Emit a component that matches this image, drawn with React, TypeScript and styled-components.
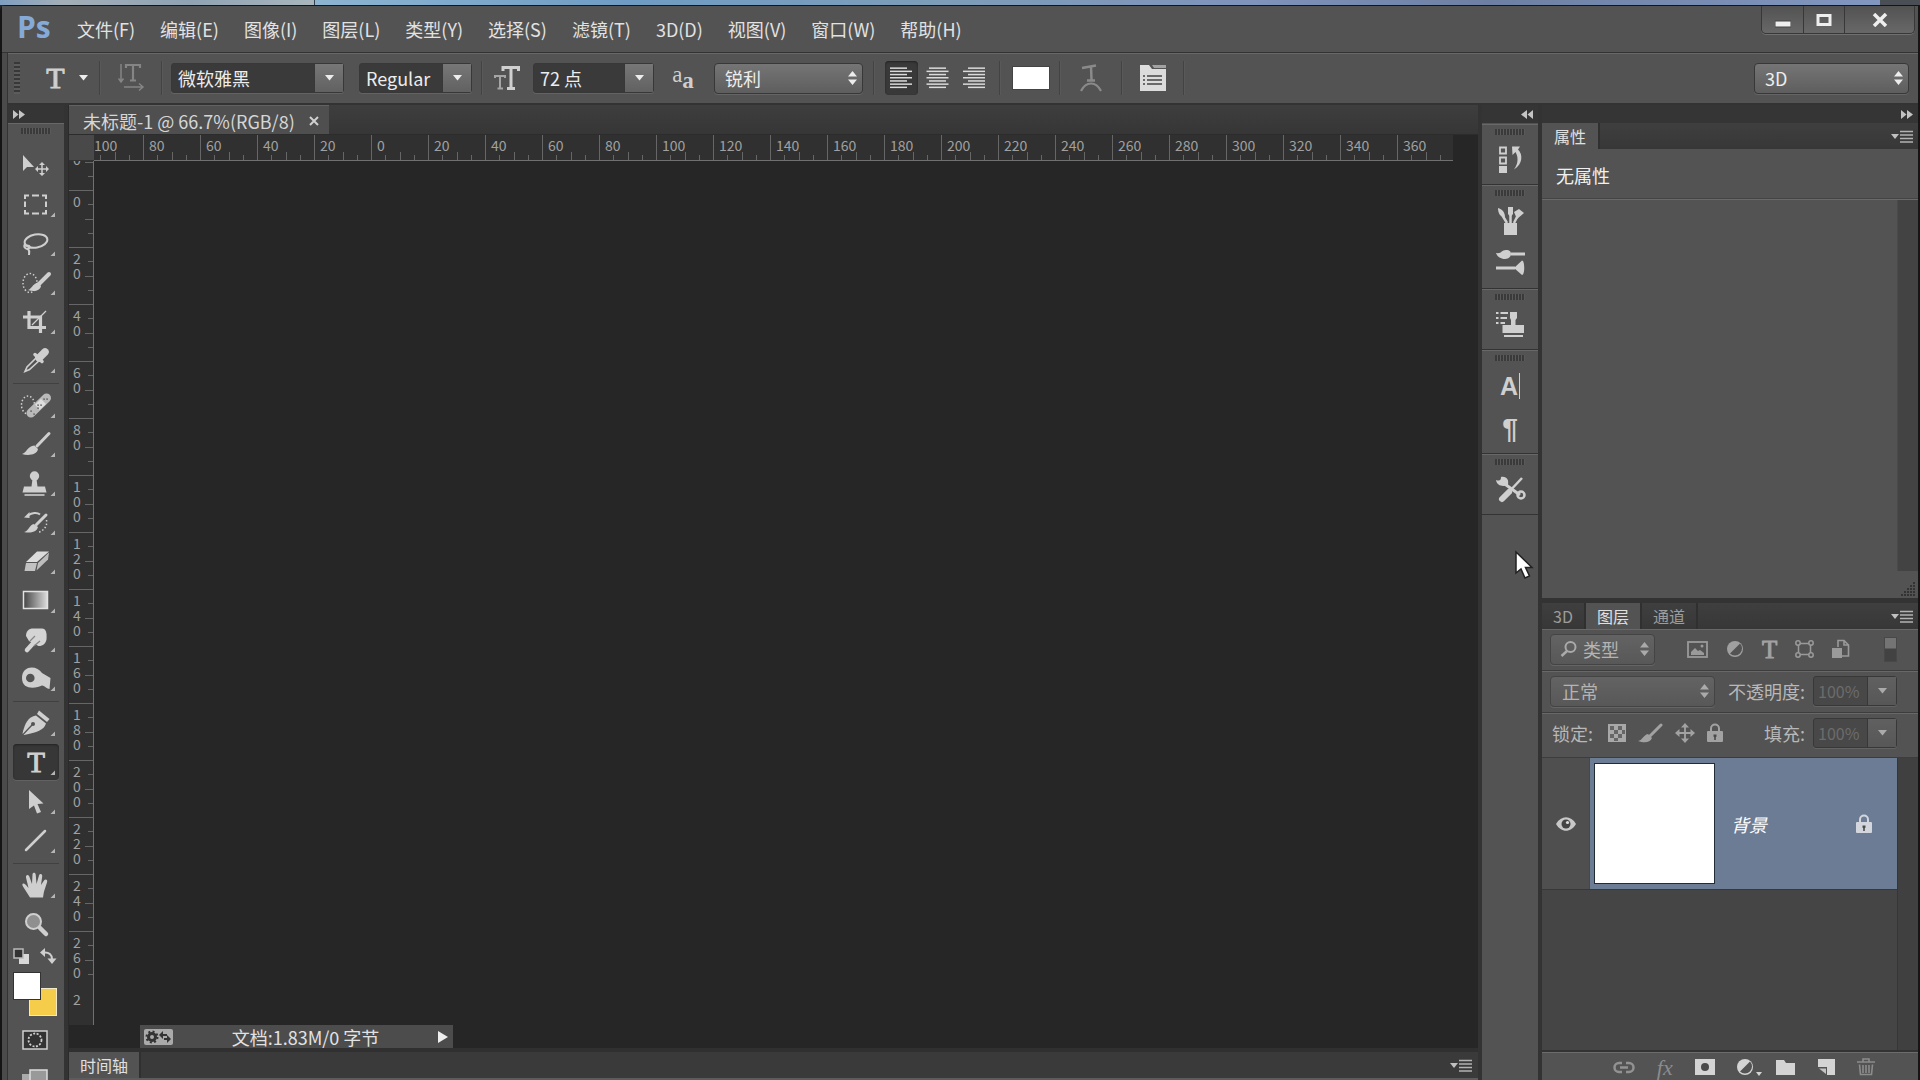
import React from "react";
import styled, { createGlobalStyle, css } from "styled-components";

const c = {
  panel: "#535353",
  bar: "#3a3a3a",
  dark: "#303030",
  canvas: "#262626",
  line: "#333333",
  hi: "#686868",
  icon: "#cfcfcf",
  dim: "#9a9a9a",
  text: "#e2e2e2",
};

const GlobalStyle = createGlobalStyle`
  * { box-sizing: border-box; }
  body { margin: 0; background: #262626; overflow: hidden; }
  body, button, input, select {
    font-family: "Noto Sans CJK SC", "Noto Sans", sans-serif;
    font-size: 18px;
    line-height: 24px;
    color: ${c.text};
  }
  button { background: none; border: 0; padding: 0; }
  svg { display: block; }
`;

/* ---------- window frame ---------- */

const Page = styled.div`
  height: 100vh;
  display: flex;
  flex-direction: column;
`;
const Desktop = styled.div`
  display: flex;
  height: 5px;
  flex: none;
  background: #4a4f55;
`;
const DesktopLeft = styled.div`
  width: 315px;
  background: linear-gradient(90deg, #7f9fc0, #a3afb8 20%, #8fa3b3 60%, #a9b6bd);
  border-right: 1px solid #33414d;
`;
const DesktopRight = styled.div`
  flex: 1;
  margin-right: 40px;
  background: linear-gradient(90deg, #8db5d2, #6f9cc4 20%, #7d9db8 40%, #7f93bb 60%, #6d80a3 75%, #8297c0);
`;
const AppWindow = styled.div`
  flex: 1;
  min-height: 0;
  display: flex;
  flex-direction: column;
  background: #4b4b4b;
  border: solid #151515;
  border-width: 1px 2px 0 2px;
  border-top-left-radius: 6px;
  padding-left: 5px;
`;

/* ---------- menu bar ---------- */

const MenuBar = styled.header`
  display: flex;
  align-items: center;
  height: 47px;
  flex: none;
  margin-left: -5px;
  padding-left: 15px;
  background: ${c.panel};
  border-bottom: 1px solid ${c.line};
`;
const Logo = styled.span`
  font-family: "Open Sans", sans-serif;
  font-size: 30px;
  font-weight: 700;
  line-height: 36px;
  padding-bottom: 4px;
  color: #86aad8;
  width: 60px;
`;
const Menu = styled.nav`
  display: flex;
  gap: 25px;
  flex: 1;
`;
const MenuItem = styled.button`
  white-space: nowrap;
`;
const WindowControls = styled.div`
  display: flex;
  align-self: flex-start;
  height: 28px;
  margin-right: 3px;
  border: 1px solid #383838;
  border-top: 0;
  border-radius: 0 0 5px 5px;
  background: linear-gradient(#525252, #686868);
  box-shadow: 0 1px 0 #707070;
`;
const WindowButton = styled.button<{ $wide?: boolean }>`
  width: ${(p) => (p.$wide ? 70 : 41)}px;
  display: grid;
  place-items: center;
  & + & { border-left: 1px solid #383838; }
`;

/* ---------- options bar ---------- */

const OptionsBar = styled.div`
  display: flex;
  align-items: center;
  height: 52px;
  flex: none;
  border: solid ${c.line};
  border-width: 0 0 2px 1px;
  box-shadow: inset 0 1px 0 ${c.hi};
  background: ${c.panel};
  padding: 0 9px 0 6px;
`;
const SideGrip = styled.span`
  width: 6px;
  height: 32px;
  margin-right: 15px;
  background: repeating-linear-gradient(#383838 0 2px, #5c5c5c 2px 4px);
`;
const Divider = styled.span`
  width: 2px;
  height: 34px;
  background: #434343;
  border-right: 1px solid #595959;
`;
const OptButton = styled.button<{ $w: number; $active?: boolean }>`
  width: ${(p) => p.$w}px;
  height: 34px;
  display: flex;
  align-items: center;
  justify-content: center;
  gap: 14px;
  border-radius: 4px;
  ${(p) => p.$active && css`
    background: #393939;
    box-shadow: inset 0 1px 2px #222;
  `}
`;
const SerifT = styled.span<{ $size: number; $color?: string }>`
  font-family: "Liberation Serif", serif;
  font-size: ${(p) => p.$size}px;
  line-height: ${(p) => p.$size}px;
  -webkit-text-stroke: 1px ${(p) => p.$color ?? c.icon};
  color: ${(p) => p.$color ?? c.icon};
`;
const ComboBox = styled.span<{ $w: number; $dim?: boolean; $ml?: number }>`
  display: inline-flex;
  width: ${(p) => p.$w}px;
  height: 30px;
  margin-left: ${(p) => p.$ml ?? 0}px;
  border: 1px solid #383838;
  border-radius: 3px;
  box-shadow: 0 1px 0 #636363;
  background: ${(p) => (p.$dim ? "#484848" : "#3a3a3a")};
`;
const ComboInput = styled.input<{ $dim?: boolean }>`
  flex: 1;
  min-width: 0;
  padding: 0 4px 0 6px;
  border: 0;
  outline: 0;
  background: none;
  color: ${(p) => (p.$dim ? "#6c6c6c" : "#ededed")};
  ${(p) => p.$dim && css`
    padding: 0 4px;
    font-size: 16px;
  `}
`;
const ComboArrow = styled.button<{ $dim?: boolean }>`
  width: 29px;
  display: grid;
  place-items: center;
  border-left: 1px solid #383838;
  background: ${(p) => (p.$dim ? "linear-gradient(#606060, #575757)" : "linear-gradient(#777, #616161)")};
`;
const SelectBox = styled.span<{ $w: number; $dim?: boolean; $ml?: number }>`
  display: inline-flex;
  align-items: center;
  position: relative;
  width: ${(p) => p.$w}px;
  height: 31px;
  margin-left: ${(p) => p.$ml ?? 0}px;
  border: 1px solid ${(p) => (p.$dim ? "#444" : "#383838")};
  border-radius: 4px;
  box-shadow: 0 1px 0 #656565;
  background: ${(p) => (p.$dim ? "linear-gradient(#636363, #585858)" : "linear-gradient(#757575, #5e5e5e)")};
  > svg { position: absolute; right: 5px; pointer-events: none; }
  > svg.lead { left: 9px; right: auto; }
`;
const Select = styled.select<{ $pad: number; $dim?: boolean }>`
  appearance: none;
  width: 100%;
  height: 100%;
  border: 0;
  outline: 0;
  background: none;
  padding: 0 20px 0 ${(p) => p.$pad}px;
  color: ${(p) => (p.$dim ? "#b4b4b4" : "#ededed")};
`;
const ColorSwatch = styled.button`
  width: 38px;
  height: 24px;
  margin: 0 9px 0 2px;
  background: #fff;
  border: 1px solid #444;
`;
const Spacer = styled.span`
  flex: 1;
`;
const AaText = styled.span<{ $low?: boolean }>`
  font-family: "Liberation Serif", serif;
  font-size: 23px;
  line-height: 20px;
  color: ${c.icon};
  font-weight: ${(p) => (p.$low ? 700 : 400)};
  align-self: ${(p) => (p.$low ? "flex-end" : "flex-start")};
`;
const AaBox = styled.span`
  display: flex;
  height: 26px;
`;

/* ---------- workspace ---------- */

const Workspace = styled.div`
  flex: 1;
  min-height: 0;
  display: flex;
  background: #333;
  border-left: 1px solid ${c.line};
`;
const DockHead = styled.div<{ $end?: boolean }>`
  height: 18px;
  flex: none;
  display: flex;
  align-items: center;
  justify-content: ${(p) => (p.$end ? "flex-end" : "flex-start")};
  padding: 0 5px;
  background: #353535;
`;
const Grip = styled.span`
  display: block;
  width: 30px;
  height: 6px;
  margin: 4px auto 0;
  background: repeating-linear-gradient(90deg, #3a3a3a 0 2px, #5a5a5a 2px 3px);
`;
const ToolColumn = styled.aside`
  width: 56px;
  flex: none;
  display: flex;
  flex-direction: column;
  overflow: hidden;
`;
const ToolBody = styled.div`
  flex: 1;
  background: ${c.panel};
  border-top: 1px solid ${c.hi};
  display: flex;
  flex-direction: column;
  align-items: center;
`;
const ToolList = styled.div`
  padding-top: 12px;
`;
const ToolGroup = styled.div`
  display: flex;
  flex-direction: column;
  gap: 3px;
  padding: 1px 0 2px;
  & + & {
    margin-top: 3px;
    padding-top: 3px;
    border-top: 1px solid #414141;
  }
`;
const ToolButton = styled.button<{ $active?: boolean }>`
  display: grid;
  place-items: center;
  width: 46px;
  height: 36px;
  border-radius: 4px;
  > * { grid-area: 1 / 1; }
  ${(p) => p.$active && css`
    background: #373737;
    box-shadow: inset 0 1px 2px #222, 0 1px 0 #626262;
  `}
`;
const SwatchHead = styled.div`
  display: flex;
  justify-content: space-between;
  width: 44px;
  margin: 4px 2px 0 0;
`;
const Swatches = styled.div`
  display: grid;
  width: 44px;
  height: 44px;
  margin: 8px 2px 0 0;
`;
const Swatch = styled.button<{ $color: string; $back?: boolean }>`
  grid-area: 1 / 1;
  width: 28px;
  height: 28px;
  background: ${(p) => p.$color};
  border: 1px solid ${(p) => (p.$back ? "#f1e9c8" : "#333")};
  ${(p) => p.$back && "place-self: end;"}
`;
const ModeButton = styled.button`
  margin: 14px 2px 0 0;
  & + & { margin-top: 19px; }
`;

/* ---------- document ---------- */

const DocumentArea = styled.main`
  flex: 1;
  min-width: 0;
  display: flex;
  flex-direction: column;
  margin: 0 4px;
  border-left: 1px solid #2b2b2b;
`;
const DocTabs = styled.div`
  display: flex;
  flex: none;
  height: 30px;
  background: linear-gradient(#3e3e3e, #363636);
  border-bottom: 1px solid #2c2c2c;
`;
const DocTab = styled.div`
  display: flex;
  align-items: center;
  justify-content: space-between;
  width: 260px;
  padding: 2px 10px 0 14px;
  background: #4f4f4f;
  border-top: 1px solid #626262;
  white-space: nowrap;
  color: #d6d6d6;
`;
const CanvasGrid = styled.div`
  flex: 1;
  min-height: 0;
  display: grid;
  grid-template: 26px 1fr / 25px 1fr;
  background: ${c.canvas};
`;
const RulerCorner = styled.div`
  background: #494949;
  border-bottom: 1px solid #333;
`;
const HRuler = styled.div`
  display: flex;
  overflow: hidden;
  margin-right: 25px;
  background: #303030;
  border-bottom: 1px solid #707070;
  font-size: 14px;
  line-height: 20px;
  color: #a0a0a0;
`;
const HLabel = styled.span`
  grid-area: 1 / 1 / 2 / 5;
  align-self: start;
  padding-left: 6px;
`;
const HCell = styled.div`
  display: grid;
  grid-template-columns: repeat(4, 1fr);
  align-items: end;
  flex: 0 0 57px;
  height: 100%;
  &:first-child { margin-left: -8px; }
  &:first-child ${HLabel} { padding-left: 8px; }
`;
const HTick = styled.i<{ $n: number; $len: number }>`
  grid-area: 1 / ${(p) => p.$n};
  width: 1px;
  height: ${(p) => p.$len}px;
  background: #666;
`;
const VRuler = styled.div`
  overflow: hidden;
  background: #303030;
  border-right: 1px solid #707070;
  font-size: 14px;
  line-height: 15px;
  color: #a0a0a0;
`;
const VCell = styled.div`
  display: grid;
  grid-template-rows: repeat(4, 1fr);
  justify-items: end;
  height: 57px;
  &:first-child { margin-top: -28px; }
`;
const VLabel = styled.span`
  grid-area: 1 / 1 / 5 / 2;
  justify-self: start;
  width: 8px;
  margin-left: 4px;
  padding-top: 4px;
  word-break: break-all;
`;
const VTick = styled.i<{ $n: number; $len: number }>`
  grid-area: ${(p) => p.$n} / 1;
  width: ${(p) => p.$len}px;
  height: 1px;
  background: #666;
`;
const StatusBar = styled.div`
  display: flex;
  align-items: center;
  flex: none;
  height: 23px;
  padding-left: 71px;
  background: ${c.canvas};
`;
const StatusInfo = styled.div`
  display: flex;
  align-items: center;
  justify-content: space-between;
  width: 313px;
  height: 23px;
  padding: 0 5px 0 4px;
  background: #4c4c4c;
`;
const Timeline = styled.div`
  display: flex;
  align-items: center;
  flex: none;
  height: 32px;
  border: solid #303030;
  border-width: 4px 0 0;
  border-bottom: 2px solid #5c5c5c;
  background: ${c.bar};
  padding-right: 6px;
`;
const PanelTab = styled.button<{ $active?: boolean; $pad?: number }>`
  align-self: stretch;
  padding: 0 ${(p) => p.$pad ?? 11}px;
  font-size: 16px;
  line-height: 24px;
  color: ${(p) => (p.$active ? "#e0e0e0" : "#9c9c9c")};
  background: ${(p) => (p.$active ? c.panel : "transparent")};
  border-right: 2px solid #303030;
`;

/* ---------- right docks ---------- */

const Docks = styled.div`
  display: grid;
  grid-template: 18px minmax(0, 1fr) / 56px 376px;
  column-gap: 4px;
  flex: none;
`;
const IconDock = styled.aside`
  padding-top: 1px;
  background: ${c.panel};
`;
const IconGroup = styled.div`
  display: flex;
  flex-direction: column;
  align-items: center;
  border-top: 1px solid ${c.hi};
  border-bottom: 1px solid #333;
  padding-bottom: 3px;
`;
const DockButton = styled.button`
  display: grid;
  place-items: center;
  width: 46px;
  height: 43px;
  ${Grip} + & { margin-top: 3px; }
`;
const GlyphMark = styled.span<{ $caret?: boolean }>`
  font-family: "Liberation Sans", sans-serif;
  font-size: ${(p) => (p.$caret ? 25 : 28)}px;
  font-weight: 700;
  line-height: 26px;
  color: ${c.icon};
  ${(p) => p.$caret && "border-right: 1px solid #cfcfcf; padding-right: 1px;"}
`;
const Panels = styled.aside`
  display: flex;
  flex-direction: column;
  min-height: 0;
  background: ${c.panel};
`;
const PanelTabs = styled.div`
  display: flex;
  align-items: center;
  flex: none;
  height: 26px;
  background: linear-gradient(#3f3f3f, #373737);
  padding-right: 5px;
`;
const Properties = styled.section`
  flex: none;
  height: 480px;
  display: flex;
  flex-direction: column;
  border-bottom: 5px solid #333;
`;
const PropertiesTitle = styled.div`
  height: 51px;
  flex: none;
  padding: 14px 14px 0;
  border-bottom: 1px solid #6a6a6a;
  box-shadow: inset 0 -1px 0 #444;
  color: #f0f0f0;
`;
const PropertiesBody = styled.div`
  flex: 1;
  display: flex;
  flex-direction: column;
  align-items: flex-end;
`;
const ScrollTrack = styled.div`
  flex: 1;
  width: 21px;
  background: #434343;
  border-left: 1px solid #4a4a4a;
`;
const ResizeGrip = styled.svg`
  margin: 11px 2px 1px;
`;
const LayersPanel = styled.section`
  flex: 1;
  min-height: 0;
  display: flex;
  flex-direction: column;
`;
const LayerRow = styled.div<{ $last?: boolean }>`
  display: flex;
  align-items: center;
  flex: none;
  height: ${(p) => (p.$last ? 45 : 42)}px;
  padding: 0 21px ${(p) => (p.$last ? 6 : 2)}px 8px;
  border-top: 1px solid #686868;
  border-bottom: 1px solid #3d3d3d;
`;
const FieldLabel = styled.label<{ $ml?: number }>`
  margin-left: ${(p) => p.$ml ?? 0}px;
  color: #b8b8b8;
  white-space: nowrap;
`;
const IconRow = styled.div<{ $gap: number; $ml: number }>`
  display: flex;
  align-items: center;
  gap: ${(p) => p.$gap}px;
  margin-left: ${(p) => p.$ml}px;
`;
const FilterToggle = styled.button`
  width: 13px;
  height: 25px;
  background: linear-gradient(#747474 0 10px, #424242 11px);
  border: 1px solid #484848;
`;
const LayerList = styled.div`
  flex: 1;
  min-height: 0;
  display: flex;
  background: #454545;
`;
const LayerItems = styled.div`
  flex: 1;
`;
const LayerScroll = styled.div`
  flex: none;
  width: 21px;
  background: #404040;
  border-left: 1px solid #363636;
`;
const LayerItem = styled.div`
  display: flex;
  height: 132px;
  border-bottom: 1px solid #383838;
`;
const EyeButton = styled.button`
  width: 48px;
  display: grid;
  place-items: center;
  background: #4f4f4f;
  border-right: 1px solid #3f4856;
`;
const LayerBody = styled.div`
  flex: 1;
  display: flex;
  align-items: center;
  padding: 0 25px 0 4px;
  background: #6c7c94;
`;
const Thumb = styled.div`
  flex: none;
  width: 121px;
  height: 121px;
  margin-right: 16px;
  background: #fff;
  border: 1px solid #222b38;
`;
const LayerName = styled.span`
  flex: 1;
  font-size: 18px;
  font-style: italic;
  color: #fff;
`;
const LayerFooter = styled.footer`
  display: flex;
  align-items: center;
  justify-content: space-between;
  flex: none;
  height: 30px;
  padding: 2px 43px 0 71px;
  border-top: 2px solid #333;
  box-shadow: inset 0 1px 0 #6c6c6c;
`;
const Fx = styled.span`
  font-family: "Liberation Serif", serif;
  font-size: 22px;
  line-height: 22px;
  font-style: italic;
  color: #8c8c8c;
`;
const Cursor = styled.svg`
  position: fixed;
  left: 1514px;
  top: 550px;
`;

/* ---------- small drawings ---------- */

const I = c.icon;

const Down = ({ color = "#ededed" }: { color?: string }) => (
  <svg width="9" height="6"><path d="M0 0H9L4.5 5.5Z" fill={color} /></svg>
);
const UpDown = ({ color = "#ededed" }: { color?: string }) => (
  <svg width="9" height="14"><path d="M0 5.5 4.5 0 9 5.5ZM0 8.5H9L4.5 14Z" fill={color} /></svg>
);
const Arrows = ({ left }: { left?: boolean }) => (
  <svg width="12" height="9"><path d={left ? "M6 0V9L0 4.5ZM12 0V9L6.5 4.5Z" : "M0 0V9L5.5 4.5ZM6 0V9L12 4.5Z"} fill="#c4c4c4" /></svg>
);
const PanelMenu = () => (
  <svg width="22" height="13"><path d="M0 4H8L4 9Z" fill="#c0c0c0" /><path d="M9 1.5H22M9 5H22M9 8.5H22M9 12H22" stroke="#b2b2b2" strokeWidth="1.6" /></svg>
);
const AlignIcon = ({ kind }: { kind: "left" | "center" | "right" }) => {
  const widths = [17, 22, 17, 22, 17, 22, 17];
  return (
    <svg width="23" height="22">
      {widths.map((w, i) => {
        const x = kind === "left" ? 0 : kind === "right" ? 23 - w : (23 - w) / 2;
        return <rect key={i} x={x} y={i * 3.2 + 0.4} width={w} height="1.5" fill="#dadada" />;
      })}
    </svg>
  );
};
const MoveCross = ({ color }: { color: string }) => (
  <svg width="20" height="20" viewBox="-10 -10 20 20">
    <path d="M-7 0H7M0-7V7" stroke={color} strokeWidth="1.8" />
    <path d="M-10 0-5.5-4V4ZM10 0 5.5-4V4ZM0-10-4-5.5H4ZM0 10-4 5.5H4Z" fill={color} />
  </svg>
);
const HalfCircle = ({ color, menu }: { color: string; menu?: boolean }) => (
  <svg width="18" height="18" overflow="visible">
    <circle cx="9" cy="9" r="8" fill={color} />
    <path d="M14 3.6A7 7 0 0 1 4 13.400Z" fill="#535353" />
    {menu && <path d="M20 14H26L23 18Z" fill={color} />}
  </svg>
);
const Padlock = ({ color }: { color: string }) => (
  <svg width="16" height="19"><path d="M4 9V5.500a4 4 0 0 1 8 0V9" fill="none" stroke={color} strokeWidth="2" /><rect y="8" width="16" height="11" rx="1" fill={color} /><path d="M6.500 11.500h3v2l-.7.7V17H7.200v-2.800l-.7-.7Z" fill="#4a4a4a" /></svg>
);

type Tool = { name: string; art: React.ReactNode; plain?: boolean; active?: boolean };

const toolGroups: Tool[][] = [
  [
    { name: "移动工具", plain: true, art: <>
      <path d="M10 8V24L14 20H21Z" fill={I} />
      <path d="M23.500 22H34.500M29 16.500V27.500" stroke={I} strokeWidth="1.500" />
      <path d="M22 22l3-3v6ZM36 22l-3-3v6ZM29 15l-3 3h6ZM29 29l-3-3h6Z" fill={I} /></> },
    { name: "矩形选框工具", art: <path d="M12 13V9.500H16M19 9.500H26M29 9.500H33V13M33 15.500V21M33 24V27.500H29M26 27.500H19M16 27.500H12V24M12 21V15.500" fill="none" stroke={I} strokeWidth="2" /> },
    { name: "套索工具", art: <g fill="none" stroke={I} strokeWidth="2"><ellipse cx="23" cy="16" rx="11.500" ry="6.500" transform="rotate(-10 23 16)" /><path d="M12 19c-2 3 1 6 4 4.500 2-2-1-4-3.500-2.500M15 24c2 2 1 4 1 6" /></g> },
    { name: "快速选择工具", art: <>
      <ellipse cx="17" cy="19" rx="7" ry="9.500" fill="none" stroke={I} strokeWidth="1.500" strokeDasharray="1.500 2" />
      <path d="M36 10 26 20" stroke={I} strokeWidth="4" strokeLinecap="round" />
      <path d="M25 18.500 28 22c-1 5-7 6-13 4 4-1 4-6 10-7.500Z" fill={I} /></> },
    { name: "裁剪工具", art: <><path d="M10 14H27.500V30M16 8V24.500H33" fill="none" stroke={I} strokeWidth="3.200" /><path d="M19 22 33 8" stroke={I} strokeWidth="1.200" /></> },
    { name: "吸管工具", art: <>
      <path d="M25 14 14 25 12 29.500 16.500 27.500 28 17" fill="none" stroke={I} strokeWidth="1.600" />
      <path d="M22 12.500 29 19.500" stroke={I} strokeWidth="3.500" strokeLinecap="round" />
      <path d="M26 16 32 10" stroke={I} strokeWidth="7.500" strokeLinecap="round" /></> },
  ],
  [
    { name: "修复画笔工具", art: <>
      <ellipse cx="15" cy="18" rx="6.500" ry="9" fill="none" stroke={I} strokeWidth="1.500" strokeDasharray="1.500 2" />
      <path d="M18 26 33.500 11" stroke="#b9b9b9" strokeWidth="9" strokeLinecap="round" />
      <path d="M22 17.500 28 12l5 5-6.500 6Z" fill="#dedede" />
      <path d="M18 24l.1.100M21 27l.1.100M25 18l.1.100M28 18l.1.100M25 21l.1.100M31 12l.1.100M34 12l.1.100" stroke="#555" strokeWidth="1.500" strokeLinecap="round" /></> },
    { name: "画笔工具", art: <><path d="M36 7.500 24 20" stroke={I} strokeWidth="3" strokeLinecap="round" /><path d="M21.500 19.500 25 23c-1 6-10 7-16 5 5-1 5-8 12.500-8.500Z" fill={I} /></> },
    { name: "仿制图章工具", art: <><circle cx="21.500" cy="11" r="4.700" fill={I} /><path d="M19.500 14H23.500L24.500 21.500H32L33.500 27.500H9.500L11 21.500H18.500Z" fill={I} /><path d="M11.500 30H31.500" stroke={I} strokeWidth="1.600" /></> },
    { name: "历史记录画笔工具", art: <>
      <path d="M15 11.500c4-3 9-3.500 12-1" fill="none" stroke={I} strokeWidth="2" /><path d="M11 13.500 16.500 8V14Z" fill={I} />
      <path d="M33 11 23.500 20.500" stroke={I} strokeWidth="3" strokeLinecap="round" />
      <path d="M21 20 25 23c-1 5-8 6.500-14 5 5-1 5-7 10-8Z" fill={I} />
      <path d="M33.500 16c1 6-2 10-8 12.500" fill="none" stroke={I} strokeWidth="1.500" strokeDasharray="1.500 2" /></> },
    { name: "橡皮擦工具", art: <><path d="M24 8.500H36L24 19H13Z" fill="#dcdcdc" /><path d="M13 20H24L22 28H11.500Z" fill="#c2c2c2" /><path d="M36 9.500 35 16.500 23.500 27.500 25 20Z" fill="#bdbdbd" /></> },
    { name: "渐变工具", art: <><defs><linearGradient id="grad"><stop offset="0" stopColor="#444" /><stop offset="1" stopColor="#ddd" /></linearGradient></defs><rect x="10.500" y="9.500" width="24" height="17" fill="url(#grad)" stroke="#e2e2e2" strokeWidth="1.500" /></> },
    { name: "涂抹工具", art: <><path d="M13 15c0-5 3-7.500 7-7.500h9c4 0 5 4 4.500 11-1 4-3 6.500-8 6.500L16 20Z" fill="#d4d4d4" /><path d="M24 18 14 29" stroke="#d4d4d4" strokeWidth="4.500" strokeLinecap="round" /><path d="M22 15 17 20M27 20 21 25" stroke="#858585" strokeWidth="1.200" /></> },
    { name: "减淡工具", art: <path fillRule="evenodd" d="M9 18C9 5 24 5 29 13L37.500 18 36.500 29C34 29 32 26 29 25.500 24 28 9 31 9 18ZM13 18a4.300 4.300 0 1 0 8.600 0 4.300 4.300 0 1 0-8.600 0Z" fill={I} /> },
  ],
  [
    { name: "钢笔工具", art: <><path d="M26 5.500 36.500 14 34 17 24 9Z" fill={I} /><path d="M23 10.500 33 18.500C31 25 24 27.500 11 30L9.500 28.500C12 18 15 12 23 10.500Z" fill={I} /><path d="M10 29.500 19 20" stroke="#535353" strokeWidth="1.300" /><circle cx="20" cy="19" r="2" fill="#535353" /></> },
    { name: "横排文字工具", active: true, art: null },
    { name: "路径选择工具", art: <path d="M16 7 30.500 20.500 24.500 21 28 29 24 30.500 21 22.500 16 26Z" fill={I} /> },
    { name: "直线工具", art: <path d="M13 28 32 9" stroke={I} strokeWidth="2.500" strokeLinecap="round" /> },
  ],
  [
    { name: "抓手工具", art: <path d="M17 30.500 10 19.500C8 16 11 15.500 13 18L15.500 21 13 10.500C12.500 7.500 15.500 7 16.500 10L19 17 19.500 7.500C19.500 5 22.500 5 22.700 7.500L23.500 17 26 8.500C27 6 29.700 7 29.200 9.500L28 18 31 13.500C32.500 11.500 35 12.500 34 15.500L31.500 23C30.500 26 30.500 28 30 30.500Z" fill={I} /> },
    { name: "缩放工具", plain: true, art: <><circle cx="20.500" cy="15.500" r="7.500" fill="#8f8f8f" stroke={I} strokeWidth="2" /><path d="M27 22 33 28" stroke={I} strokeWidth="4.500" strokeLinecap="round" /></> },
  ],
];

const dockGroups: { name: string; art: React.ReactNode }[][] = [
  [{ name: "历史记录", art: <><path d="M7 9.500H13V15.500H7ZM7 19.500H13V25.500H7Z" fill="none" stroke={I} strokeWidth="1.800" /><rect x="6" y="28" width="8" height="7" fill={I} /><path d="M19 8.500H27L25 11.500C30 16 30 26 21 31.500 26 25 25 18 22.500 14L19.500 17Z" fill={I} /></> }],
  [
    { name: "画笔预设", art: <><rect x="11" y="24" width="13" height="12" fill={I} /><path d="M14 24 8 14M17.500 24V13M21 24 25 16" stroke={I} strokeWidth="2.500" /><path d="M5 9c4 1 7 4 7 9-5 0-7-4-7-9ZM15 8h5v7l-2.500 3L15 15ZM21 13l5-3 5 4-7 6Z" fill={I} /></> },
    { name: "画笔", art: <><path d="M3 11c6 1 5-3 10-3 4 0 5 2 5 4s-2 5-6 5c-5 0-8-3-9-6ZM18 10.500H32V13.500H18ZM3 24.500H22V27.500H3ZM21 26 29 18.500C32 18.500 32 33 29 33Z" fill={I} /></> },
  ],
  [{ name: "仿制源", art: <><path d="M3 10H5.500M3 15H5.500M3 20H5.500M7.500 10H15M7.500 15H14M7.500 20H12" stroke={I} strokeWidth="2.200" /><path d="M17 9H24V15L22.500 17V22H31V30H9.500V22H18V17L17 15ZM11 32H30V34H11Z" fill={I} /></> }],
  [{ name: "字符", art: null }, { name: "段落", art: null }],
  [{ name: "工具预设", art: <><path d="M9 14 27 27" stroke={I} strokeWidth="3" /><path d="M3 12c3 1 5 1 5-3 6-1 8 3 7 8-5 2-11 1-12-5Z" fill={I} /><circle cx="28" cy="27" r="3.500" fill="none" stroke={I} strokeWidth="2.500" /><path d="M29 10 14 26" stroke={I} strokeWidth="2.500" /><path d="M16 24 9 31" stroke={I} strokeWidth="6" strokeLinecap="round" /></> }],
];

/* ---------- rulers ---------- */

const hMarks = Array.from({ length: 24 }, (_, i) => Math.abs(i * 20 - 100));
const vMarks = [...Array.from({ length: 15 }, (_, i) => String(Math.abs(i * 20 - 20))), "2"];
const menus = ["文件(F)", "编辑(E)", "图像(I)", "图层(L)", "类型(Y)", "选择(S)", "滤镜(T)", "3D(D)", "视图(V)", "窗口(W)", "帮助(H)"];

export default function App() {
  return (
    <Page>
      <GlobalStyle />
      <Desktop><DesktopLeft /><DesktopRight /></Desktop>
      <AppWindow>
        <MenuBar>
          <Logo>Ps</Logo>
          <Menu>{menus.map((m) => <MenuItem key={m}>{m}</MenuItem>)}</Menu>
          <WindowControls>
            <WindowButton aria-label="最小化"><svg width="16" height="16"><rect x="0" y="9" width="16" height="6" fill="#eee" stroke="#444" /></svg></WindowButton>
            <WindowButton aria-label="最大化"><svg width="16" height="14"><rect x="2" y="2.500" width="12" height="9" fill="none" stroke="#eee" strokeWidth="3" /></svg></WindowButton>
            <WindowButton $wide aria-label="关闭"><svg width="16" height="14"><path d="M2 1 14 13M14 1 2 13" stroke="#eee" strokeWidth="3.500" /></svg></WindowButton>
          </WindowControls>
        </MenuBar>

        <OptionsBar>
          <SideGrip />
          <OptButton $w={64} aria-label="当前工具"><SerifT $size={30}>T</SerifT><Down /></OptButton>
          <Divider />
          <OptButton $w={60} aria-label="切换文本取向">
            <svg width="27" height="30" fill="none" stroke="#858585"><path d="M3 1V18M.5 15.500 3 19 5.500 15.500M6 24H24M21 20.500 25 24 21 27.500" strokeWidth="1.500" /><path d="M8 5V2H22V5M15 2V17M12 17.500H18" strokeWidth="2.200" /></svg>
          </OptButton>
          <Divider />
          <ComboBox $w={173} $ml={8}><ComboInput aria-label="字体" defaultValue="微软雅黑" /><ComboArrow aria-label="字体列表"><Down /></ComboArrow></ComboBox>
          <ComboBox $w={113} $ml={15}><ComboInput aria-label="字体样式" defaultValue="Regular" /><ComboArrow aria-label="样式列表"><Down /></ComboArrow></ComboBox>
          <OptButton as="span" $w={20}><Divider /></OptButton>
          <OptButton as="label" htmlFor="size" $w={29} aria-label="字体大小">
            <svg width="26" height="26" fill="none" stroke={I}><path d="M9 6V2.500H24.500V6M17 2V23M13 23.500H21" strokeWidth="3" /><path d="M1 13V11H11V13M6 11V23M3.500 23.500H9" strokeWidth="2" stroke="#a5a5a5" /></svg>
          </OptButton>
          <ComboBox $w={121} $ml={12}><ComboInput id="size" defaultValue="72 点" /><ComboArrow aria-label="大小列表"><Down /></ComboArrow></ComboBox>
          <OptButton as="label" htmlFor="aa" $w={58} aria-label="消除锯齿"><AaBox><AaText>a</AaText><AaText $low>a</AaText></AaBox></OptButton>
          <SelectBox $w={149} $ml={2}><Select id="aa" $pad={10}><option>锐利</option></Select><UpDown /></SelectBox>
          <OptButton as="span" $w={22}><Divider /></OptButton>
          <OptButton $w={33} $active aria-label="左对齐"><AlignIcon kind="left" /></OptButton>
          <OptButton $w={39} aria-label="居中对齐"><AlignIcon kind="center" /></OptButton>
          <OptButton $w={33} aria-label="右对齐"><AlignIcon kind="right" /></OptButton>
          <OptButton as="span" $w={20}><Divider /></OptButton>
          <ColorSwatch aria-label="文本颜色" />
          <Divider />
          <OptButton $w={60} aria-label="文字变形">
            <svg width="24" height="30" fill="none" stroke="#8a8a8a"><path d="M3 5 17 2.500M12 3 12.500 17M8 17.500H16" strokeWidth="2.500" /><path d="M2 28C7 18 17 18 22 28" strokeWidth="2.200" /></svg>
          </OptButton>
          <Divider />
          <OptButton $w={60} aria-label="字符和段落面板">
            <svg width="26" height="28"><path d="M0 1H9L12 5H26V27H0Z" fill="#dcdcdc" /><path d="M12 1H26V4H14Z" fill="#a2a2a2" /><path d="M3 12H5M3 16H5M3 20H5M7 12H22M7 16H22M7 20H22" stroke="#444" strokeWidth="1.600" /></svg>
          </OptButton>
          <Divider />
          <Spacer />
          <SelectBox $w={155}><Select aria-label="工作区" $pad={10}><option>3D</option></Select><UpDown /></SelectBox>
        </OptionsBar>

        <Workspace>
          <ToolColumn>
            <DockHead><Arrows /></DockHead>
            <ToolBody>
              <Grip />
              <ToolList>
                {toolGroups.map((group, g) => (
                  <ToolGroup key={g}>
                    {group.map((t) => (
                      <ToolButton key={t.name} aria-label={t.name} $active={t.active}>
                        {t.active && <SerifT $size={29}>T</SerifT>}
                        <svg width="46" height="36">{t.art}{!t.plain && <path d="M42 26.500V31H37.500Z" fill="#b5b5b5" />}</svg>
                      </ToolButton>
                    ))}
                  </ToolGroup>
                ))}
              </ToolList>
              <SwatchHead>
                <button aria-label="默认颜色"><svg width="16" height="16"><rect x="6" y="6" width="10" height="10" fill="#d8d8d8" /><rect x="1" y="1" width="9" height="9" fill="#333" stroke="#bbb" strokeWidth="1.500" /></svg></button>
                <button aria-label="切换颜色"><svg width="17" height="16"><path d="M4 4.500C9 4 12 7 12 11" fill="none" stroke={I} strokeWidth="2" /><path d="M0 4.500 5 0V9ZM12 16 7.500 10.500H16.500Z" fill={I} /></svg></button>
              </SwatchHead>
              <Swatches><Swatch $color="#f5cd4b" $back aria-label="背景色" /><Swatch $color="#fff" aria-label="前景色" /></Swatches>
              <ModeButton aria-label="快速蒙版"><svg width="26" height="20"><rect x="1" y="1" width="24" height="18" fill="#333" stroke={I} strokeWidth="1.500" /><circle cx="13" cy="10" r="6.500" fill="none" stroke={I} strokeWidth="1.800" strokeDasharray="2 1.500" /></svg></ModeButton>
              <ModeButton aria-label="屏幕模式"><svg width="26" height="20"><rect x="0" y="5" width="20" height="14" fill="#aaa" /><rect x="8" y="1" width="17" height="14" fill="#999" stroke="#ddd" strokeWidth="1.500" /></svg></ModeButton>
            </ToolBody>
          </ToolColumn>

          <DocumentArea>
            <DocTabs>
              <DocTab><span>未标题-1 @ 66.7%(RGB/8)</span>
                <button aria-label="关闭文档"><svg width="10" height="10"><path d="M1 1 9 9M9 1 1 9" stroke="#d0d0d0" strokeWidth="2" /></svg></button>
              </DocTab>
            </DocTabs>
            <CanvasGrid>
              <RulerCorner />
              <HRuler>
                {hMarks.map((m, i) => (
                  <HCell key={i}><HLabel>{m}</HLabel><HTick $n={1} $len={25} /><HTick $n={2} $len={5} /><HTick $n={3} $len={8} /><HTick $n={4} $len={5} /></HCell>
                ))}
              </HRuler>
              <VRuler>
                {vMarks.map((m, i) => (
                  <VCell key={i}><VLabel>{m}</VLabel>
                    {i < vMarks.length - 1 && <><VTick $n={1} $len={24} /><VTick $n={2} $len={5} /><VTick $n={3} $len={8} /><VTick $n={4} $len={5} /></>}
                  </VCell>
                ))}
              </VRuler>
            </CanvasGrid>
            <StatusBar>
              <StatusInfo>
                <svg width="29" height="16"><rect width="29" height="16" rx="2" fill="#aaa" /><circle cx="8" cy="8" r="3.500" fill="none" stroke="#333" strokeWidth="3" /><circle cx="8" cy="8" r="5.500" fill="none" stroke="#333" strokeWidth="2" strokeDasharray="2 2.300" /><path d="M15 6 19 2V5H23V7H19V10ZM27 10 23 6V9H20V11H23V14Z" fill="#333" /></svg>
                <span>文档:1.83M/0 字节</span>
                <svg width="10" height="14"><path d="M0 1V13L10 7Z" fill="#eee" /></svg>
              </StatusInfo>
            </StatusBar>
            <Timeline><PanelTab $active>时间轴</PanelTab><Spacer /><PanelMenu /></Timeline>
          </DocumentArea>

          <Docks>
            <DockHead $end><Arrows left /></DockHead>
            <DockHead $end><Arrows /></DockHead>
            <IconDock>
              {dockGroups.map((group, g) => (
                <IconGroup key={g}>
                  <Grip />
                  {group.map((d) => (
                    <DockButton key={d.name} aria-label={d.name}>
                      {d.name === "字符" ? <GlyphMark $caret>A</GlyphMark> : d.name === "段落" ? <GlyphMark>¶</GlyphMark> : <svg width="34" height="43">{d.art}</svg>}
                    </DockButton>
                  ))}
                </IconGroup>
              ))}
            </IconDock>
            <Panels>
              <Properties>
                <PanelTabs><PanelTab $active $pad={12}>属性</PanelTab><Spacer /><PanelMenu /></PanelTabs>
                <PropertiesTitle>无属性</PropertiesTitle>
                <PropertiesBody>
                  <ScrollTrack />
                  <ResizeGrip width="15" height="15">
                    {[0, 1, 2, 3, 4].map((row) =>
                      Array.from({ length: row + 1 }, (_, k) => (
                        <rect key={`${row}-${k}`} x={12 - k * 3} y={row * 3} width="2" height="2" fill="#333" />
                      )),
                    )}
                  </ResizeGrip>
                </PropertiesBody>
              </Properties>
              <LayersPanel>
                <PanelTabs>
                  <PanelTab>3D</PanelTab><PanelTab $active>图层</PanelTab><PanelTab>通道</PanelTab>
                  <Spacer /><PanelMenu />
                </PanelTabs>
                <LayerRow>
                  <SelectBox $w={105} $dim>
                    <svg className="lead" width="18" height="18"><circle cx="10.500" cy="7" r="5" fill="none" stroke="#aaa" strokeWidth="2" /><path d="M7 11 1.500 16" stroke="#aaa" strokeWidth="2.500" /></svg>
                    <Select aria-label="图层过滤" $pad={32} $dim><option>类型</option></Select><UpDown color="#aaa" />
                  </SelectBox>
                  <IconRow $gap={18} $ml={32}>
                    <button aria-label="像素图层"><svg width="21" height="17"><rect x="1" y="1" width="19" height="15" fill="none" stroke={c.dim} strokeWidth="1.800" /><path d="M4 14V11L8 7 11 10 13 9 17 12V14Z" fill={c.dim} /><circle cx="15" cy="5" r="1.500" fill={c.dim} /></svg></button>
                    <button aria-label="调整图层"><HalfCircle color="#a0a0a0" /></button>
                    <button aria-label="文字图层"><SerifT $size={25} $color="#a2a2a2">T</SerifT></button>
                    <button aria-label="形状图层"><svg width="19" height="18" fill="none" stroke={c.dim} strokeWidth="1.500"><path d="M3.500 3.500H15.500V14.500H3.500Z" /><g fill="#535353"><circle cx="3" cy="3" r="2.200" /><circle cx="16" cy="3" r="2.200" /><circle cx="3" cy="15" r="2.200" /><circle cx="16" cy="15" r="2.200" /></g></svg></button>
                    <button aria-label="智能对象"><svg width="18" height="20"><path d="M6 8V1.500H12L16.500 6V17H10M12 1.500V6H16.500" fill="none" stroke={c.dim} strokeWidth="1.600" /><rect y="9" width="10" height="10" fill={c.dim} /></svg></button>
                  </IconRow>
                  <Spacer /><FilterToggle aria-label="打开或关闭图层过滤" />
                </LayerRow>
                <LayerRow>
                  <SelectBox $w={165} $dim><Select aria-label="混合模式" $pad={11} $dim><option>正常</option></Select><UpDown color="#aaa" /></SelectBox>
                  <Spacer />
                  <FieldLabel htmlFor="opacity">不透明度:</FieldLabel>
                  <ComboBox $w={84} $ml={8} $dim><ComboInput id="opacity" $dim defaultValue="100%" /><ComboArrow $dim aria-label="不透明度滑块"><Down color="#aaa" /></ComboArrow></ComboBox>
                </LayerRow>
                <LayerRow $last>
                  <FieldLabel as="span" $ml={2}>锁定:</FieldLabel>
                  <IconRow $gap={12} $ml={15}>
                    <button aria-label="锁定透明像素"><svg width="18" height="18"><rect width="18" height="18" fill="#a8a8a8" /><path d="M2 2H6V6H2ZM10 2H14V6H10ZM6 6H10V10H6ZM14 6H17V10H14ZM2 10H6V14H2ZM10 10H14V14H10ZM6 14H10V17H6Z" fill="#666" /></svg></button>
                    <button aria-label="锁定图像像素"><svg width="25" height="20"><path d="M23 2 12 13" stroke="#a2a2a2" strokeWidth="3" strokeLinecap="round" /><path d="M10 11 14 15C12 20 6 20 0 18 5 17 5 12 10 11Z" fill="#a2a2a2" /></svg></button>
                    <button aria-label="锁定位置"><MoveCross color="#a2a2a2" /></button>
                    <button aria-label="锁定全部"><Padlock color="#a2a2a2" /></button>
                  </IconRow>
                  <Spacer />
                  <FieldLabel htmlFor="fill">填充:</FieldLabel>
                  <ComboBox $w={84} $ml={8} $dim><ComboInput id="fill" $dim defaultValue="100%" /><ComboArrow $dim aria-label="填充滑块"><Down color="#aaa" /></ComboArrow></ComboBox>
                </LayerRow>
                <LayerList>
                  <LayerItems>
                    <LayerItem>
                      <EyeButton aria-label="图层可见性"><svg width="20" height="14"><path d="M0 7C5-2 15-2 20 7 15 16 5 16 0 7Z" fill="#c8c8c8" /><circle cx="10" cy="7" r="4.500" fill="#444" /><circle cx="11.500" cy="5.500" r="1.600" fill="#ddd" /></svg></EyeButton>
                      <LayerBody><Thumb /><LayerName>背景</LayerName><Padlock color="#d3d7dd" /></LayerBody>
                    </LayerItem>
                  </LayerItems>
                  <LayerScroll />
                </LayerList>
                <LayerFooter>
                  <button aria-label="链接图层"><svg width="22" height="13" fill="none" stroke="#929292" strokeWidth="2.500"><path d="M9 2H6A4.500 4.500 0 0 0 6 11H9M13 2H16A4.500 4.500 0 0 1 16 11H13M7 6.500H15" /></svg></button>
                  <button aria-label="图层样式"><Fx>fx</Fx></button>
                  <button aria-label="图层蒙版"><svg width="20" height="16"><rect width="20" height="16" fill="#d4d4d4" /><circle cx="10" cy="8" r="4" fill="#4a4a4a" /></svg></button>
                  <button aria-label="新建调整图层"><HalfCircle color="#d4d4d4" menu /></button>
                  <button aria-label="新建组"><svg width="20" height="16"><path d="M0 1H8L10 4H19V16H0Z" fill="#d4d4d4" /></svg></button>
                  <button aria-label="新建图层"><svg width="17" height="16"><path d="M0 0H17V16H9V8H0Z" fill="#d4d4d4" /><path d="M1 9.500H8V15Z" fill="#c4c4c4" /></svg></button>
                  <button aria-label="删除图层"><svg width="18" height="18" fill="none" stroke="#8c8c8c" strokeWidth="1.600"><path d="M0 4H18M6 3.500V1H12V3.500M2.500 6.500 3.500 16.500H14.500L15.500 6.500M6 7V15M9 7V15M12 7V15" /></svg></button>
                </LayerFooter>
              </LayersPanel>
            </Panels>
          </Docks>
        </Workspace>
      </AppWindow>
      <Cursor width="22" height="30" viewBox="0 0 22 30">
        <path d="M2 2V23L7 19 11 28 15.500 26 11.500 17.500H18Z" fill="#fff" stroke="#222" strokeWidth="1.500" />
      </Cursor>
    </Page>
  );
}
